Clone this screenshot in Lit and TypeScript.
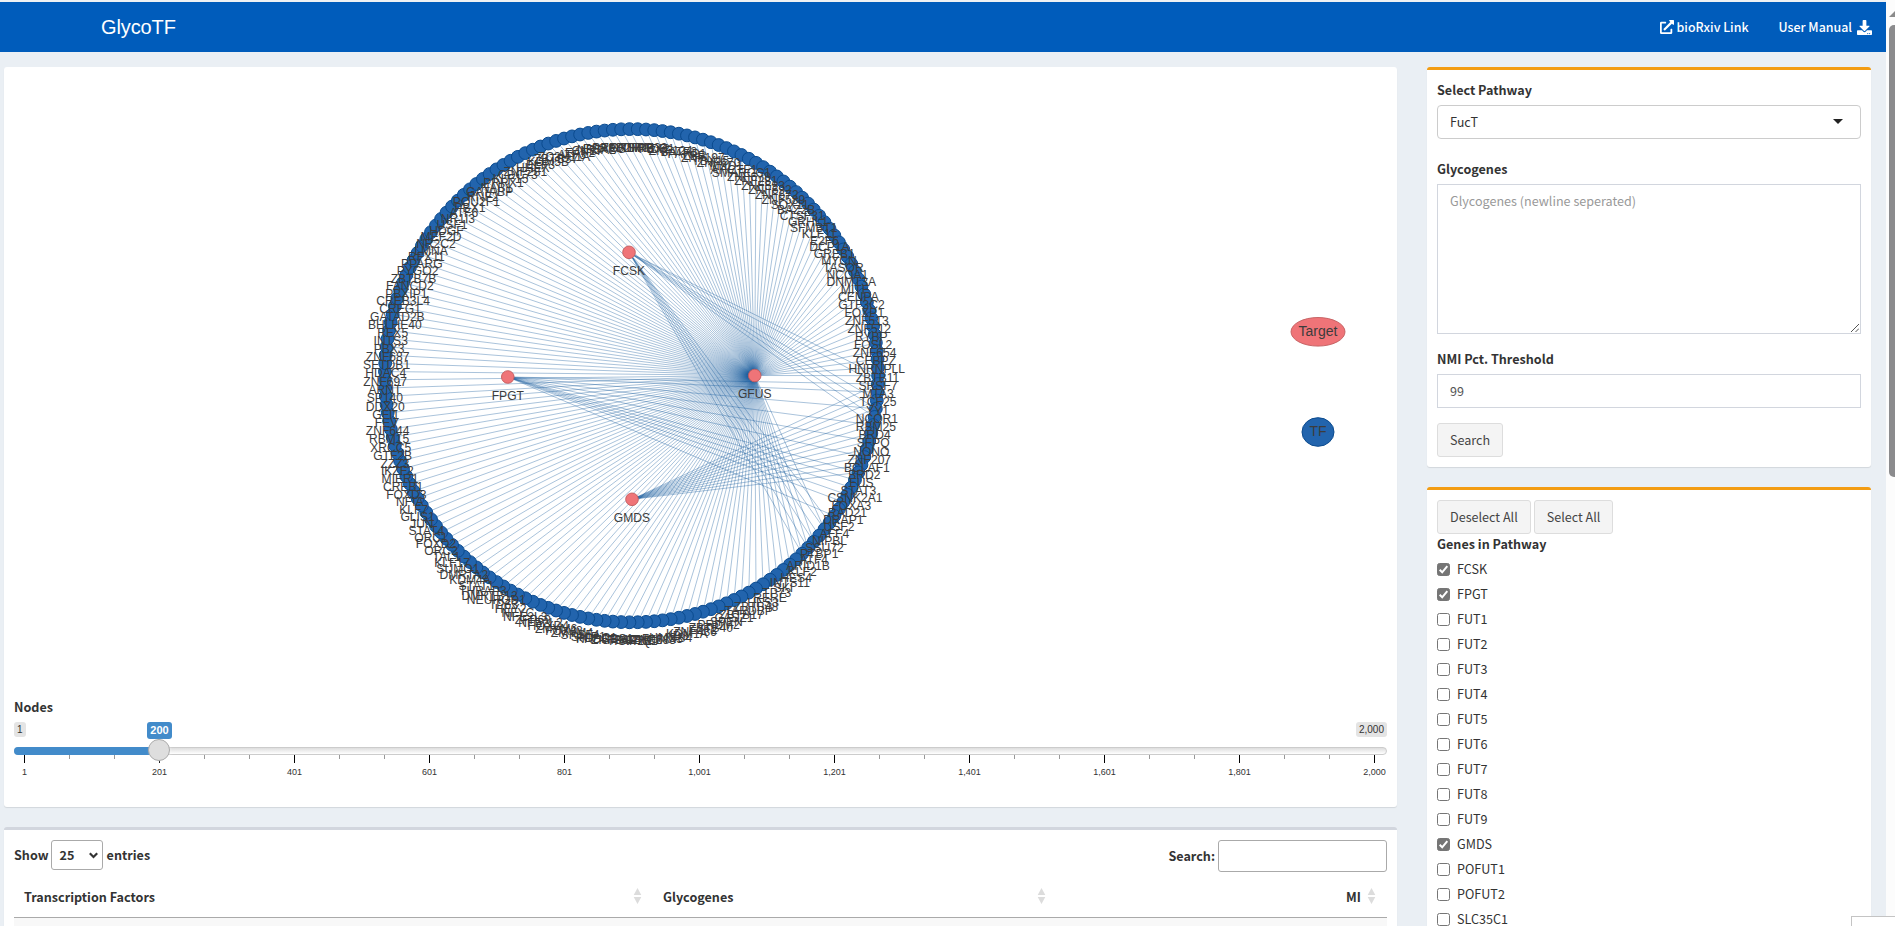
import { LitElement, html, svg, css } from "lit";
import { customElement, property } from "lit/decorators.js";

interface Gene { name: string; checked?: boolean }

const GENES: Gene[] = [
  { name: "FCSK", checked: true }, { name: "FPGT", checked: true },
  { name: "FUT1" }, { name: "FUT2" }, { name: "FUT3" }, { name: "FUT4" },
  { name: "FUT5" }, { name: "FUT6" }, { name: "FUT7" }, { name: "FUT8" },
  { name: "FUT9" }, { name: "GMDS", checked: true }, { name: "POFUT1" },
  { name: "POFUT2" }, { name: "SLC35C1" },
];

// Transcription factors in ring order, clockwise from three o'clock.
const FACTORS = (
  "MTA3 TCF25 YY1 NCOR1 RBM25 BRD4 SFPQ NONO ZNF207 BCLAF1 BRD2 FUS STAT3 CSNK2A1 FOXA3 RAD21 DRAP1 USF2 AFF4 NIPBL " +
  "SSU72 PTBP1 ATF4 ARID1B KLF2 HES4 INTS11 SKI TP73 RERE HES3 ZBTB48 TARDBP ZBTB17 CASZ1 SPEN PRDM2 ZBTB40 E2F2 ZNF436 " +
  "KDM1A ID3 HMGB4 RUNX3 ZNF683 PHC2 SFPQ1 TFAP2E GRHL3 ZNF362 KHDRBS1 HDAC1 SNIP1 SRSF4 ZMYM4 FOXJ3 ZMYM6 HOXD4 NFE2L2 ZFP69 " +
  "NFE2L3 NFYC HEY2 TP63 NEUROD1 DMRTB12 THRAP3 STAT1 KDM4A DMRTA2 SUMO1 KLF17 TAL1 ORC2 FOXD2 ORC1 STAT4 JUN GLIS1 KLF7 " +
  "NFIA FOXD3 CREB1 MIER1 IKZF2 ZZZ3 GTF2B XRCC5 RBM15 ZNF644 FEV GFI1 DDX20 SP140 ARNT ZNF697 HDAC4 SETDB1 ZNF687 PBX3 " +
  "INTS3 RFX5 BHLHE40 GATAD2B CREG1 CREB3L4 PBXIP1 FANCD2 ZBTB7B PYGO2 PPARG RFX11 LMNA NR2C2 MEF2D HDGF USF1 NR1I3 ATF6 PBX1 " +
  "POU2F1 RNF2 GATABP NAB1 PRRX1 KLF15 CDC73 ZNF281 HHEX ELF3 KDM5B ZBTB37 ZC3H11A ATF3 EAF2 CNBP NR5A2 ESRRG PROX1 MBD4 " +
  "TFB2M SRSF9 THRB TRIM33 PBX2 DR1 ZNF124 BATF3 PARP1 LBR ZNF197 TBX15 ZNF670 MXD1 AHCTF1 SMARCC1 ZNF678 ZNF281 ZNF593 ZNF692 " +
  "ZNF672 ZNF589 SOX11 BAZ2B CTSF31 GRHL1 SFMBT1 KLF11 E2F6 DCP1A GREB1 MYCN TASOR NCOA1 DNMT3A MITF CENPA GTF3C2 FOXP1 ZNF513 " +
  "ZNF512 RYBP FOSL2 ZNF654 CEBPZ HNRNPLL ZBTB11 SRSF7"
).split(" ");

const RING = 187;
const CX = 631.5, CY = 375.7, R = 246.6;

// Upper-right labels are anchored to the end of the ring so both ends meet at the start angle.
const ringLabel = (i: number) => {
  const back = RING - i;
  return back <= 48 ? FACTORS[FACTORS.length - back] : FACTORS[i];
};
const at = (i: number) => {
  const a = (i / RING) * Math.PI * 2;
  return { x: CX + R * Math.cos(a), y: CY + R * Math.sin(a) };
};

const TARGETS = [
  { name: "FCSK", x: 629, y: 252.3, links: [0, 1, 3, 4, 5, 6, 19, 20, 21, 22, 23, 24] },
  { name: "FPGT", x: 507.8, y: 377, links: [1, 2, 4, 6, 8, 10, 12, 13, 14, 15, 16, 18] },
  { name: "GMDS", x: 632, y: 499.3, links: [1, 2, 3, 4, 5, 6, 7, 8, 9, 10, 11, 12] },
  {
    name: "GFUS", x: 754.7, y: 375.5,
    links: [0, 20, ...Array.from({ length: RING - 22 }, (_, k) => k + 22)],
  },
];

@customElement("regulation-graph")
class RegulationGraph extends LitElement {
  static styles = css`
    :host { display: block; }
    svg { display: block; width: 1374px; height: 610px; }
    .edge { stroke: #0b5299; stroke-opacity: 0.35; stroke-width: 1; }
    .tf { fill: #2264ad; stroke: #0b4b8f; stroke-width: 1; }
    .target { fill: #ef7478; stroke: #c25c5e; stroke-width: 0.9; }
    text { font-family: "Liberation Sans", Arial, sans-serif; font-size: 12.1px; fill: #3c3c3c; text-anchor: middle; }
    .legend { font-size: 14px; }
  `;
  render() {
    const ids = Array.from({ length: RING }, (_, i) => i);
    return html`<svg viewBox="14 77 1374 610">
      ${TARGETS.map((t) => t.links.map((i) => {
        const p = at(i);
        return svg`<line class="edge" x1=${t.x} y1=${t.y} x2=${p.x.toFixed(2)} y2=${p.y.toFixed(2)}></line>`;
      }))}
      ${ids.map((i) => {
        const p = at(i);
        return svg`<circle class="tf" cx=${p.x.toFixed(2)} cy=${p.y.toFixed(2)} r="6.4"></circle>`;
      })}
      ${ids.map((i) => {
        const p = at(i);
        return svg`<text x=${p.x.toFixed(2)} y=${(p.y + 22.4).toFixed(2)}>${ringLabel(i)}</text>`;
      })}
      ${TARGETS.map((t) => svg`<circle class="target" cx=${t.x} cy=${t.y} r="6.3"></circle>
        <text x=${t.x} y=${t.y + 22.6}>${t.name}</text>`)}
      <ellipse class="target" cx="1318" cy="331.8" rx="27" ry="14.3"></ellipse>
      <text class="legend" x="1318" y="336">Target</text>
      <ellipse class="tf" cx="1318" cy="432" rx="16" ry="14.3"></ellipse>
      <text class="legend" x="1318" y="436">TF</text>
    </svg>`;
  }
}

@customElement("node-slider")
class NodeSlider extends LitElement {
  static styles = css`
    :host { display: block; font-family: "Liberation Sans", Arial, sans-serif; color: #333; width: 1373px; }
    .tags { display: flex; justify-content: space-between; height: 25px; position: relative; align-items: flex-start; }
    .tag { background: #e4e4e4; border-radius: 3px; font-size: 10px; line-height: 11px; padding: 2px 3px; }
    .value { position: absolute; left: 133px; top: 0; width: 25px; height: 17px; background: #428bca; color: #fff;
      border-radius: 3px; font-size: 11px; line-height: 17px; text-align: center; font-weight: 700; }
    .track { box-sizing: border-box; height: 8px; border: 1px solid #ccc; border-radius: 8px; position: relative;
      background: linear-gradient(#dedede, #fff); }
    .fill { position: absolute; left: -1px; top: -1px; width: 146px; height: 8px; border-radius: 8px 0 0 8px; background: #428bca; }
    .knob { position: absolute; box-sizing: border-box; left: 133px; top: -9px; width: 22px; height: 22px; border-radius: 22px;
      border: 1px solid #ababab; background: #dedede; box-shadow: 1px 1px 3px rgba(255,255,255,.3); }
    svg { display: block; width: 1373px; height: 24px; overflow: visible; }
    .major { stroke: #000; }
    .minor { stroke: #999; }
    text { font-size: 9px; text-anchor: middle; fill: #333; }
  `;
  render() {
    const stops = ["1", "201", "401", "601", "801", "1,001", "1,201", "1,401", "1,601", "1,801", "2,000"];
    const px = (k: number) => 10.5 + Math.round(k * 135);
    return html`
      <div class="tags"><span class="tag">1</span><span class="tag">2,000</span><span class="value">200</span></div>
      <div class="track"><div class="fill"></div><div class="knob"></div></div>
      <svg viewBox="0 0 1373 24">
        ${stops.map((s, k) => svg`
          <line class="major" x1=${px(k)} x2=${px(k)} y1="0" y2="8"></line>
          <text x=${px(k)} y="19.5">${s}</text>
          ${k < 10 ? [1, 2].map((m) => svg`<line class="minor" x1=${px(k + m / 3)} x2=${px(k + m / 3)} y1="0" y2="4"></line>`) : ""}`)}
      </svg>`;
  }
}

@customElement("sort-mark")
class SortMark extends LitElement {
  static styles = css`
    :host { display: block; }
    svg { display: block; width: 9px; height: 16px; fill: #dcdcdc; }
  `;
  render() {
    return html`<svg viewBox="0 0 9 16"><path d="M4.5 0 8.3 7H.7zM4.5 16 8.3 9H.7z"></path></svg>`;
  }
}

@customElement("gene-check")
class GeneCheck extends LitElement {
  @property() name = "";
  @property({ type: Boolean }) checked = false;
  static styles = css`
    :host { display: flex; align-items: center; gap: 7px; height: 20px; margin-bottom: 5px; }
    .box { box-sizing: border-box; width: 13px; height: 13px; border: 1px solid #767676; border-radius: 2.5px; background: #fff; }
    .on { background: #757575; }
    svg { display: block; width: 11px; height: 11px; }
    path { fill: none; stroke: #fff; stroke-width: 2; }
  `;
  render() {
    return html`<span class="box ${this.checked ? "on" : ""}">
      ${this.checked ? html`<svg viewBox="0 0 11 11"><path d="M1.7 5.8 4.2 8.3 9.3 2.2"></path></svg>` : ""}
      </span><span>${this.name}</span>`;
  }
}

@customElement("app-root")
class AppRoot extends LitElement {
  static styles = css`
    :host { display: flex; width: 1895px; height: 926px; overflow: hidden; position: relative;
      font-family: "Noto Sans CJK SC", sans-serif; font-size: 12.6px; line-height: 20px; color: #333; }
    .page { width: 1886px; background: #eaeff4; display: flex; flex-direction: column; }
    header { flex: none; box-sizing: border-box; height: 52px; border-top: 2px solid #eef1f4; background: #005cbb; color: #fff;
      display: flex; align-items: center; padding: 0 14px 0 101px; font-weight: 500; }
    .brand { font: 20px "Liberation Sans", Arial, sans-serif; line-height: 50px; margin-right: auto; padding-bottom: 1px; letter-spacing: -0.1px; }
    .link { display: flex; align-items: center; font-size: 12.4px; }
    .link svg { width: 14px; height: 14px; fill: #fff; }
    .external { gap: 3px; margin-right: 30px; }
    .manual { gap: 5px; }
    .manual svg { width: 15px; height: 15px; }
    .columns { display: flex; gap: 30px; padding: 15px 0 0 4px; }
    .left { width: 1393px; }
    .right { width: 444px; }
    .box { box-sizing: border-box; background: #fff; border-radius: 3px; box-shadow: 0 1px 1px rgba(0,0,0,.1); margin-bottom: 20px; padding: 10px; }
    .network { height: 740px; }
    .network b { display: block; margin: 10px 0 5px; }
    .table { border-top: 3px solid #d2d6de; height: 200px; }
    .warn { border-top: 3px solid #f39c12; }
    b, .label { display: block; font-weight: 700; }
    .tools { display: flex; align-items: flex-start; font-weight: 700; height: 32px; }
    .show { line-height: 30px; margin-right: 2px; }
    .entries { line-height: 30px; margin-left: 4px; margin-right: auto; }
    .length { box-sizing: border-box; width: 52px; height: 30px; border: 1px solid #aaa; border-radius: 3px; padding: 0 4px 0 8px;
      display: flex; align-items: center; justify-content: space-between; }
    .length svg { width: 9px; height: 7px; fill: none; stroke: #333; stroke-width: 2.2; }
    .find { line-height: 32px; margin-right: 3px; }
    .query { box-sizing: border-box; width: 169px; height: 32px; border: 1px solid #aaa; border-radius: 3px; }
    .head { display: grid; grid-template-columns: 639px 404px 330px; width: 1373px; height: 46px; box-sizing: border-box;
      border-bottom: 1px solid #aaa; font-weight: 700; }
    .cell { display: flex; align-items: center; justify-content: space-between; padding: 5px 11px 0 10px; }
    .cell sort-mark { margin-top: -3px; }
    .cell.num { justify-content: flex-end; gap: 6px; }
    .row { height: 30px; width: 1373px; background: #f8f8f8; }
    .form { height: 400px; }
    .form .label { margin: 0 0 5px; }
    .select { box-sizing: border-box; height: 34px; border: 1px solid #ccc; border-radius: 4px; padding: 0 17px 0 12px; margin-bottom: 20px;
      display: flex; align-items: center; justify-content: space-between; }
    .caret { border: 5px solid transparent; border-top-color: #222; border-bottom: 0; margin-top: -2px; }
    .area, .field { box-sizing: border-box; border: 1px solid #d2d6de; padding: 6px 12px; margin-bottom: 15px; }
    .area { height: 150px; color: #999; display: flex; justify-content: space-between; padding: 6px 1px 1px 12px; }
    .area svg { align-self: flex-end; width: 8px; height: 8px; stroke: #555; }
    .field { height: 34px; color: #555; }
    .btn { box-sizing: border-box; display: inline-block; height: 34px; line-height: 32px; border: 1px solid #ddd; border-radius: 3px;
      background: #f4f4f4; color: #444; padding: 0 12px; }
    .pair { display: flex; gap: 3px; }
    .genes { height: 460px; }
    .genes .label { margin-bottom: 5px; }
    .bar { width: 9px; background: #fcfcfc; overflow: hidden; padding-top: 10px; box-sizing: border-box; }
    .up { width: 0; border: 7px solid transparent; border-bottom: 7px solid #8b8b8b; border-top: 0; margin-left: 3px; }
    .thumb { width: 12px; height: 452px; margin: 8px 0 0 3px; border-radius: 5px; background: #8b8b8d; }
    .status { position: absolute; box-sizing: border-box; left: 1851px; top: 916px; width: 60px; height: 20px; border: 1px solid #c4c4c4; background: #fff; }
  `;
  render() {
    return html`
      <div class="page">
        <header>
          <span class="brand">GlycoTF</span>
          <span class="link external"><svg viewBox="0 0 512 512"><path d="M432,320H400a16,16,0,0,0-16,16V448H64V128H208a16,16,0,0,0,16-16V80a16,16,0,0,0-16-16H48A48,48,0,0,0,0,112V464a48,48,0,0,0,48,48H400a48,48,0,0,0,48-48V336A16,16,0,0,0,432,320ZM488,0h-128c-21.37,0-32.05,25.91-17,41l35.73,35.73L135,320.37a24,24,0,0,0,0,34L157.67,377a24,24,0,0,0,34,0L435.28,133.32,471,169c15,15,41,4.5,41-17V24A24,24,0,0,0,488,0Z"></path></svg>bioRxiv Link</span>
          <span class="link manual">User Manual<svg viewBox="0 0 512 512"><path d="M216 0h80c13.3 0 24 10.7 24 24v168h87.7c17.8 0 26.7 21.5 14.1 34.1L269.7 378.3c-7.5 7.5-19.8 7.5-27.3 0L90.1 226.1c-12.6-12.6-3.7-34.1 14.1-34.1H192V24c0-13.3 10.7-24 24-24zm296 376v112c0 13.3-10.7 24-24 24H24c-13.3 0-24-10.7-24-24V376c0-13.3 10.7-24 24-24h146.7l49 49c20.1 20.1 52.5 20.1 72.6 0l49-49H488c13.3 0 24 10.7 24 24zm-124 88c0-11-9-20-20-20s-20 9-20 20 9 20 20 20 20-9 20-20zm64 0c0-11-9-20-20-20s-20 9-20 20 9 20 20 20 20-9 20-20z"></path></svg></span>
        </header>
        <div class="columns">
          <div class="left">
            <section class="box network">
              <regulation-graph></regulation-graph>
              <b>Nodes</b>
              <node-slider></node-slider>
            </section>
            <section class="box table">
              <div class="tools">
                <span class="show">Show</span>
                <span class="length">25<svg viewBox="0 0 9 7"><path d="M.8 1.2 4.5 5 8.2 1.2"></path></svg></span>
                <span class="entries">entries</span>
                <span class="find">Search:</span><span class="query"></span>
              </div>
              <div class="head">
                <div class="cell">Transcription Factors<sort-mark></sort-mark></div>
                <div class="cell">Glycogenes<sort-mark></sort-mark></div>
                <div class="cell num">MI<sort-mark></sort-mark></div>
              </div>
              <div class="row"></div>
            </section>
          </div>
          <div class="right">
            <section class="box warn form">
              <span class="label">Select Pathway</span>
              <div class="select">FucT<span class="caret"></span></div>
              <span class="label">Glycogenes</span>
              <div class="area">Glycogenes (newline seperated)<svg viewBox="0 0 8 8"><path d="M0 8 8 0M4.5 8 8 4.5"></path></svg></div>
              <span class="label">NMI Pct. Threshold</span>
              <div class="field">99</div>
              <span class="btn">Search</span>
            </section>
            <section class="box warn genes">
              <div class="pair"><span class="btn">Deselect All</span><span class="btn">Select All</span></div>
              <span class="label">Genes in Pathway</span>
              ${GENES.map((g) => html`<gene-check .name=${g.name} .checked=${!!g.checked}></gene-check>`)}
            </section>
          </div>
        </div>
      </div>
      <div class="bar"><div class="up"></div><div class="thumb"></div></div>
      <div class="status"></div>
    `;
  }
}
